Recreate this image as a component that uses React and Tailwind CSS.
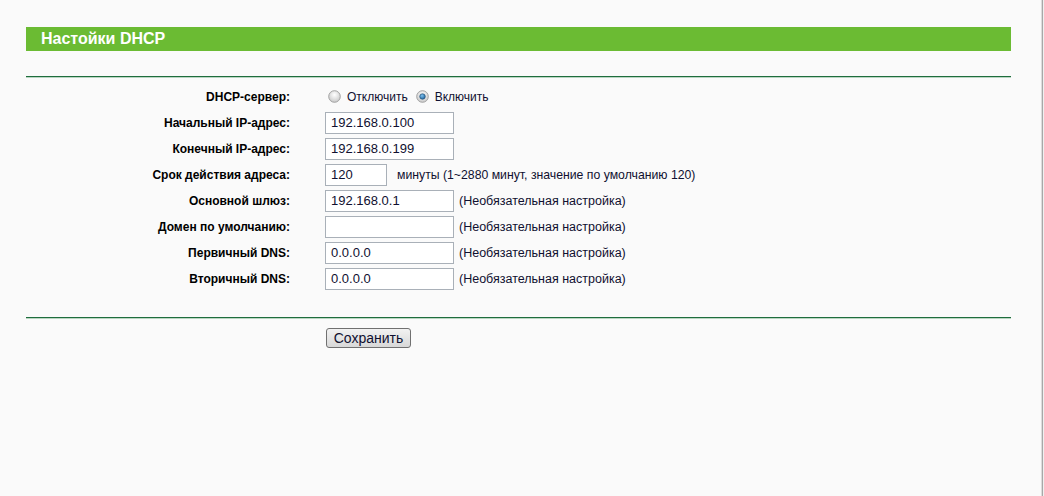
import React from "react";

const font = { fontFamily: '"Liberation Sans", Arial, sans-serif' };

function Radio({ checked }) {
  return (
    <svg width="13" height="13" viewBox="0 0 13 13" className="shrink-0">
      <defs>
        <radialGradient id={checked ? "rc" : "ru"} cx="50%" cy="35%" r="65%">
          <stop offset="0%" stopColor="#ffffff" />
          <stop offset="100%" stopColor="#c9c9c9" />
        </radialGradient>
        <radialGradient id="dot" cx="40%" cy="35%" r="70%">
          <stop offset="0%" stopColor="#7fc1ee" />
          <stop offset="100%" stopColor="#1a5f9a" />
        </radialGradient>
      </defs>
      <circle cx="6.5" cy="6.5" r="5.8" fill={`url(#${checked ? "rc" : "ru"})`} stroke="#9a9a9a" strokeWidth="0.9" />
      {checked && <circle cx="6.5" cy="6.5" r="2.8" fill="url(#dot)" stroke="#24496b" strokeWidth="0.6" />}
    </svg>
  );
}

function Input({ value, w = "w-[129px]" }) {
  return (
    <div className={`${w} h-[22px] border border-[#a9b0b8] bg-white flex items-center pl-[5px] text-[13px] text-[#101030]`}>
      {value}
    </div>
  );
}

const Hint = ({ children }) => (
  <span className="ml-[5px] text-[12.5px] text-[#101030]">{children}</span>
);

function Row({ label, children }) {
  return (
    <div className="grid grid-cols-[264px_1fr] gap-x-[35px] h-[26px] items-center">
      <div className="text-right text-[12px] font-bold text-[#000]">{label}</div>
      <div className="flex items-center">{children}</div>
    </div>
  );
}

function Rule() {
  return (
    <div className="w-[985px]">
      <div className="h-[1px] bg-[#1f6d3d]" />
      <div className="h-[1px] bg-[#b9d6c2]" />
    </div>
  );
}

export default function App() {
  const opt = "(Необязательная настройка)";
  return (
    <div className="flex w-[1044px] h-[496px] bg-[#fafafa]" style={font}>
      <div className="flex-1 pl-[26px] pt-[27px]">
        <div className="w-[985px] h-[24px] bg-[#6bbb33] flex items-center pl-[15px]">
          <span className="text-white font-bold text-[16px] leading-none">Настойки DHCP</span>
        </div>
        <div className="mt-[25px]">
          <Rule />
        </div>
        <div className="pt-[6px]">
          <Row label="DHCP-сервер:">
            <div className="flex items-center text-[12px] text-[#101030] -mt-[1px]">
              <span className="ml-[3px]"><Radio /></span>
              <span className="ml-[6px]">Отключить</span>
              <span className="ml-[8px]"><Radio checked /></span>
              <span className="ml-[6px]">Включить</span>
            </div>
          </Row>
          <Row label="Начальный IP-адрес:"><Input value="192.168.0.100" /></Row>
          <Row label="Конечный IP-адрес:"><Input value="192.168.0.199" /></Row>
          <Row label="Срок действия адреса:">
            <Input value="120" w="w-[62px]" />
            <span className="ml-[10px] text-[12.25px] text-[#101030]">минуты (1~2880 минут, значение по умолчанию 120)</span>
          </Row>
          <Row label="Основной шлюз:"><Input value="192.168.0.1" /><Hint>{opt}</Hint></Row>
          <Row label="Домен по умолчанию:"><Input value="" /><Hint>{opt}</Hint></Row>
          <Row label="Первичный DNS:"><Input value="0.0.0.0" /><Hint>{opt}</Hint></Row>
          <Row label="Вторичный DNS:"><Input value="0.0.0.0" /><Hint>{opt}</Hint></Row>
        </div>
        <div className="mt-[25px]">
          <Rule />
        </div>
        <div className="pl-[300px] mt-[9px]">
          <button
            className="h-[20px] w-[85px] border border-[#707070] rounded-[3px] bg-gradient-to-b from-[#f2f2f2] to-[#d8d8d8] text-[14px] text-[#101030] leading-none flex items-center justify-center"
            style={font}
          >
            Сохранить
          </button>
        </div>
      </div>
      <div className="w-[1px] bg-[#dcdcdc]" />
      <div className="w-[1px] bg-[#a8a8a8]" />
      <div className="w-[1px] bg-[#f0f0f0]" />
    </div>
  );
}
